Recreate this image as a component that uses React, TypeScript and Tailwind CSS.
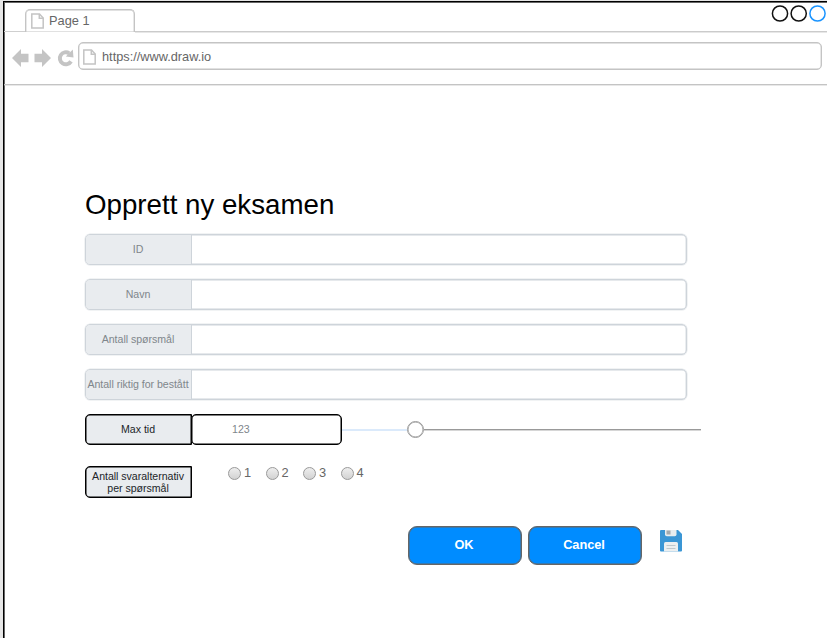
import React from "react";

function PageIcon() {
  return (
    <svg width="13" height="16" viewBox="0 0 13 16" fill="none" stroke="#c4c4c4" strokeWidth="1.5" className="shrink-0">
      <path d="M0.8 1H8.5L12.2 5V14.9H0.8Z" />
      <path d="M8.3 1V5.2H12.3" />
    </svg>
  );
}

function NavIcons() {
  return (
    <svg width="63" height="22" viewBox="0 0 63 22" className="shrink-0">
      <path d="M0 11L9 2V6.7H16.5V15.3H9V20Z" fill="#c4c4c4" />
      <path d="M39 11L30 2V6.7H22.5V15.3H30V20Z" fill="#c4c4c4" />
      <path d="M59 14.4A6 6 0 1 1 57.2 6.3" fill="none" stroke="#c4c4c4" strokeWidth="4" />
      <path d="M60.8 2.6L61.5 10.4L53.8 9.4Z" fill="#c4c4c4" />
    </svg>
  );
}

function WindowButtons() {
  return (
    <svg width="57" height="18" viewBox="0 0 57 18" fill="none" strokeWidth="1.5">
      <circle cx="10" cy="9.5" r="7.6" stroke="#111" />
      <circle cx="28.7" cy="9.5" r="7.6" stroke="#111" />
      <circle cx="47.5" cy="9.5" r="7.6" stroke="#1a94ff" />
    </svg>
  );
}

function Field({ label }: { label: string }) {
  return (
    <div className="flex h-[31px] w-[602px] rounded-[5px] border border-[#ced4da] shadow-[0_0_0_0.5px_#e3e7ea,inset_0_0_0_0.4px_#ced4da]">
      <div className="flex w-[106px] shrink-0 items-center justify-center whitespace-nowrap rounded-l-[4px] border-r border-[#ced4da] bg-[#e9ecef] pr-px text-[10.6px] tracking-[-0.03px] text-[#80868b]">
        {label}
      </div>
    </div>
  );
}

function Radio({ label }: { label: string }) {
  return (
    <div className="flex w-[37.5px] items-center gap-[3px]">
      <span className="h-[13px] w-[13px] rounded-full border border-[#999] bg-linear-to-b from-[#eee] to-[#d2d2d2]" />
      <span className="text-[12.8px] leading-4 text-[#666]">{label}</span>
    </div>
  );
}

function SaveIcon() {
  return (
    <svg width="22" height="22" viewBox="0 0 22 22">
      <path d="M1 0H18L22 4V20.5Q22 21.5 21 21.5H1Q0 21.5 0 20.5V1Q0 0 1 0Z" fill="#3a96d5" />
      <path d="M5 0H16.5V4.5Q16.5 6.3 14.7 6.3H6.8Q5 6.3 5 4.5Z" fill="#e8edef" />
      <rect x="6.5" y="0.5" width="4" height="4" fill="#a3aaad" />
      <path d="M5.5 12H16.5Q18 12 18 13.5V21.5H4V13.5Q4 12 5.5 12Z" fill="#eceff0" />
      <path d="M6.5 15.5H15.5M6.5 18.5H15.5" stroke="#bfc8cc" strokeWidth="1" />
    </svg>
  );
}

export default function App() {
  return (
    <div className="h-[638px] w-[827px] overflow-hidden bg-[#e6e6e6] pl-[3px] pt-px font-['Liberation_Sans',Arial,sans-serif]">
      <div className="h-full border-l-[1.5px] border-t border-black bg-white shadow-[inset_1px_1px_0_#666]">
        <div className="flex h-[30px] items-end">
          <div className="h-[1.5px] w-[21px] bg-[#cfcfcf]" />
          <div className="flex h-[23px] w-[110px] gap-[5px] rounded-t-[5px] border border-b-0 border-[#c4c4c4] pl-[5px] pt-[3px] shadow-[inset_0_0_0_0.4px_#c4c4c4]">
            <PageIcon />
            <span className="text-[12.8px] leading-[15px] text-[#666]">Page 1</span>
          </div>
          <div className="flex h-full flex-1 justify-end border-b border-[#cbcbcb] pt-[2px] shadow-[0_0.5px_0_#cfcfcf]">
            <WindowButtons />
          </div>
        </div>
        <div className="flex h-[53px] items-center border-b border-[#c4c4c4] pb-px pl-2 shadow-[0_0.4px_0_#c4c4c4]">
          <NavIcons />
          <div className="-mt-[3px] ml-[3px] flex h-7 w-[744px] shrink-0 items-center gap-[6px] rounded-[5px] border border-[#c4c4c4] pl-1 pt-px shadow-[inset_0_0_0_0.4px_#c4c4c4]">
            <PageIcon />
            <span className="text-[12.75px] leading-4 text-[#666]">https://www.draw.io</span>
          </div>
        </div>
        <main className="pl-[81px] pt-[102px]">
          <h1 className="h-[47px] text-[27.7px] leading-9 text-black">Opprett ny eksamen</h1>
          <div className="flex flex-col gap-[14px]">
            <Field label="ID" />
            <Field label="Navn" />
            <Field label="Antall spørsmål" />
            <Field label="Antall riktig for bestått" />
          </div>
          <div className="mt-[14px] flex h-[31px] items-center">
            <div className="flex h-[31px] w-[107px] items-center justify-center rounded-l-[5px] border border-black bg-[#e9ecef] pr-px text-[10.6px] text-[#212529] shadow-[inset_0_0_0_0.5px_#000]">
              Max tid
            </div>
            <div className="-ml-px flex h-[31px] w-[151px] items-center rounded-[5px] border border-black bg-white pl-10 text-[10.6px] text-[#80868b] shadow-[inset_0_0_0_0.5px_#000]">
              123
            </div>
            <div className="h-[2px] w-[65px] bg-[#dbeafb]" />
            <div className="h-[17px] w-[17px] rounded-full border border-[#999] bg-white shadow-[inset_0_0_0_0.5px_#999]" />
            <div className="h-px w-[277px] bg-[#999] shadow-[0_0.4px_0_#999]" />
          </div>
          <div className="mt-[21px] flex h-[31px]">
            <div className="flex h-8 w-[107px] shrink-0 items-center justify-center rounded-l-[5px] border border-black bg-[#e9ecef] pr-px text-center text-[10.6px] leading-3 tracking-[-0.03px] text-[#212529] shadow-[inset_0_0_0_0.5px_#000]">
              Antall svaralternativ
              <br />
              per spørsmål
            </div>
            <div className="ml-9 flex h-[14px] items-center">
              <Radio label="1" />
              <Radio label="2" />
              <Radio label="3" />
              <Radio label="4" />
            </div>
          </div>
          <div className="ml-[323px] mt-[29px] flex gap-[6px]">
            <button className="h-[39px] w-[114px] rounded-[9px] border border-[#666] bg-[#008cff] pb-px pr-[2px] text-[12.8px] font-bold tracking-[-0.05px] text-white shadow-[inset_0_0_0_0.5px_#666]">OK</button>
            <button className="h-[39px] w-[114px] rounded-[9px] border border-[#666] bg-[#008cff] pb-px pr-[2px] text-[12.8px] font-bold tracking-[-0.05px] text-white shadow-[inset_0_0_0_0.5px_#666]">Cancel</button>
            <div className="ml-3 pt-1">
              <SaveIcon />
            </div>
          </div>
        </main>
      </div>
    </div>
  );
}
